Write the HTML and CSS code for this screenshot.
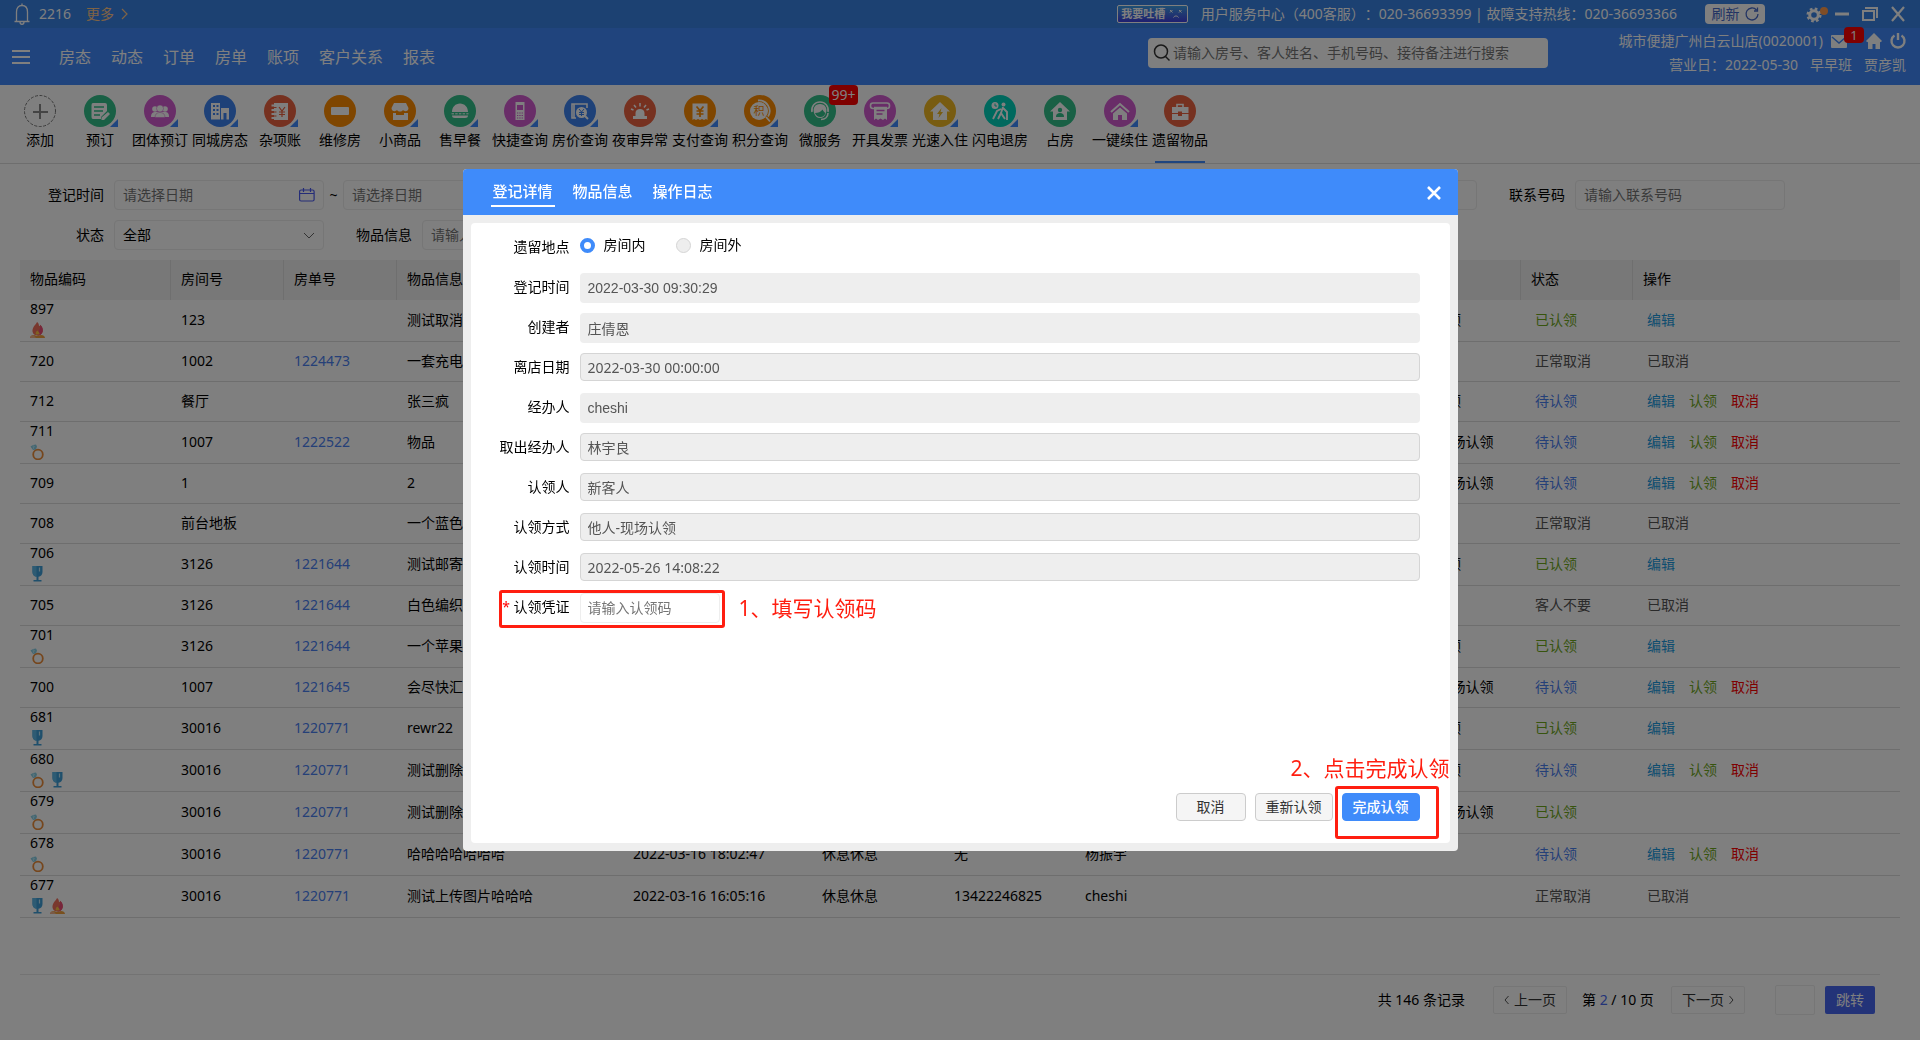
FILE: index.html
```html
<!DOCTYPE html>
<html lang="zh-CN">
<head>
<meta charset="utf-8">
<title>遗留物品</title>
<link rel="stylesheet" href="styles.css">
</head>
<body>
<svg class="sprite" aria-hidden="true">
  <symbol id="fire" viewBox="0 0 16 16">
    <path d="M7 0c-.5 2-5 5-4.500 9.500C2.800 12 5 13.500 7.500 13.500c3 0 5.500-2 5.300-5.500-.2-2.500-1.300-4-2.600-5.300-.2 1-.6 1.300-1.200 1.500C9 2.500 8.500 1 7 0z" fill="#f2705c"/>
    <path d="M10.200 2.700c1.500 1.500 2.600 3 2.600 5.300 0 3.500-2.300 5.500-5.300 5.500 0-4 3.500-6 2.700-10.800z" fill="#ee4a78"/>
    <path d="M7.300 8.500c-1.500 1.500-2 2.500-1.500 4h3.700c.5-1.500-.7-2.500-2.200-4z" fill="#ffc545"/>
    <path d="M0 16c0-2 2-3 4-3l3 1 4-1c2 0 4 1 4 3z" fill="#f2a13c"/>
    <path d="M0 16c0-2 2-3 3.500-2.800L6 16z" fill="#f5b48c"/>
  </symbol>
  <symbol id="ring" viewBox="0 0 16 16">
    <path d="M.5 2.500 3 1l3-.5 1 2-1 3-3 .5z" fill="#86cfe6"/>
    <path d="M3 3.500 5 2.500M3 1l.5 4" stroke="#b9e8f5" fill="none"/>
    <circle cx="8" cy="10.500" r="4.800" fill="none" stroke="#ec8d3a" stroke-width="1.800"/>
  </symbol>
  <symbol id="cup" viewBox="0 0 16 16">
    <path d="M2.500 0h10v6c0 2.500-1.500 4.300-4 4.800V14h3v1.500h-8V14h3v-3.200C4 10.300 2.500 8.500 2.500 6z" fill="#3f9fd8"/>
    <path d="M2.500 0h4v10.800C4 10.300 2.500 8.500 2.500 6z" fill="#5cb7e6"/>
    <path d="M9.500 1.500v4" stroke="#bfe6f8" stroke-width="1.200"/>
  </symbol>
</svg>

<header>
  <div class="strip">
    <svg class="bell" width="16" height="22" viewBox="0 0 16 22" fill="none" stroke="#fff" stroke-width="1.300"><path d="M8 .5v2M2.500 18V9c0-4 2-6.500 5.500-6.500s5.500 2.500 5.500 6.500v9M.5 18.500h15M6 19c0 3 4 3 4 0"/></svg>
    <span>2216</span>
    <a class="more" href="#">更多<svg width="7" height="12" viewBox="0 0 7 12" fill="none" stroke="currentColor" stroke-width="1.200"><path d="M1 1l5 5-5 5"/></svg></a>
    <button class="gripe">我要吐槽<svg width="14" height="10" viewBox="0 0 14 10" fill="none" stroke="#fff"><path d="M1 1l2.500 2.500M3.500 1 1 3.500M10 1l2.500 2.500M12.500 1 10 3.500M4.500 8.500c1-2 4-2 5 0"/></svg></button>
    <span class="hotline">用户服务中心（400客服）：020-36693399 | 故障支持热线：020-36693366</span>
    <button class="refresh">刷新<svg width="14" height="14" viewBox="0 0 14 14" fill="none" stroke="currentColor" stroke-width="1.300"><path d="M11.500 3A6 6 0 1 0 13 7M12.500.5V4H9"/></svg></button>
    <div class="window">
      <button aria-label="设置"><svg width="22" height="20" viewBox="0 0 22 20"><circle cx="8" cy="11" r="4.300" fill="none" stroke="#fff" stroke-width="3"/><circle cx="8" cy="11" r="6.300" fill="none" stroke="#fff" stroke-width="2.500" stroke-dasharray="2.600 2.350"/><circle cx="18" cy="7" r="4" fill="#ff9a4d"/></svg></button>
      <button aria-label="最小化"><svg width="14" height="14" viewBox="0 0 14 14"><path d="M0 7h14" stroke="#fff" stroke-width="3"/></svg></button>
      <button aria-label="还原"><svg width="16" height="14" viewBox="0 0 16 14" fill="none" stroke="#fff" stroke-width="2"><path d="M1 4h11v9H1zM3 1h12v10"/></svg></button>
      <button aria-label="关闭窗口"><svg width="14" height="14" viewBox="0 0 14 14"><path d="M1 0l12 14M13 0 1 14" stroke="#fff" stroke-width="2.200"/></svg></button>
    </div>
  </div>
  <div class="nav">
    <button class="burger" aria-label="菜单"><svg width="18" height="16" viewBox="0 0 18 16"><path d="M0 2h18M0 8h18M0 14h18" stroke="#fff" stroke-width="2"/></svg></button>
    <nav>
      <a href="#">房态</a><a href="#">动态</a><a href="#">订单</a><a href="#">房单</a><a href="#">账项</a><a href="#">客户关系</a><a href="#">报表</a>
    </nav>
    <div class="search">
      <svg width="18" height="18" viewBox="0 0 18 18" fill="none" stroke="#333" stroke-width="1.500"><circle cx="8" cy="7.500" r="6.500"/><path d="m12.500 12.500 4 4"/></svg>
      <input type="search" aria-label="搜索" placeholder="请输入房号、客人姓名、手机号码、接待备注进行搜索">
    </div>
    <div class="account">
      <div class="line">
        <span>城市便捷广州白云山店(0020001)</span>
        <button class="mail" aria-label="消息"><svg width="16" height="16" viewBox="0 0 16 16"><rect y="2" width="16" height="13" rx="1" fill="#fff"/><path d="m1 4 7 6 7-6" fill="none" stroke="#4189fa" stroke-width="1.500"/></svg><span class="badge">1</span></button>
        <button aria-label="首页"><svg width="16" height="16" viewBox="0 0 16 16" fill="#fff"><path d="m8 0 8 8-1.300 1.300L14 8.700V16H9.500v-5h-3v5H2V8.700l-.7.600L0 8z"/></svg></button>
        <button aria-label="退出"><svg width="16" height="16" viewBox="0 0 16 16" fill="none" stroke="#fff" stroke-width="2.400"><path d="M4.500 2.500a6.500 6.500 0 1 0 7 0M8 0v7"/></svg></button>
      </div>
      <div class="line">
        <span>营业日：2022-05-30</span><span>早早班</span><span>贾彦凯</span>
      </div>
    </div>
  </div>
</header>

<div class="tools">
  <button><svg class="ico" viewBox="-4 0 40 32"><circle cx="16" cy="16" r="15.500" fill="none" stroke="#777" stroke-dasharray="3 1.500"/><path d="M16 9v15M9 17h15" stroke="#888" stroke-width="2"/></svg>添加</button>
  <button><svg class="ico" viewBox="-4 0 40 32"><circle class="green" cx="16" cy="16" r="16"/><path d="M26 32h8v-8z" fill="#3f8bff"/><path d="M9 8h12q2 0 2 2v6l-6 6v2H9q-1.500 0-1.500-2V10Q7.500 8 9 8zM24 17l2 2-6 6h-2.500v-2.500z" fill="#fff"/><path class="s-green" d="M10 12h10M10 16h9M10 20h6" stroke-width="1.300"/></svg>预订</button>
  <button><svg class="ico" viewBox="-4 0 40 32"><circle class="purple" cx="16" cy="16" r="16"/><path d="M26 32h8v-8z" fill="#3f8bff"/><g fill="#fff"><circle cx="11" cy="14" r="2.800"/><circle cx="21" cy="14" r="2.800"/><path d="M7 22c0-4 2-5 4.500-5H21c2.500 0 4 1 4 5z"/></g><g fill="#fff" class="s-purple" stroke-width=".5"><circle cx="16" cy="13.500" r="3.500"/><path d="M11 22.500c0-3.500 2-5 5-5s5 1.500 5 5z"/></g></svg>团体预订</button>
  <button><svg class="ico" viewBox="-4 0 40 32"><circle class="blue" cx="16" cy="16" r="16"/><path d="M26 32h8v-8z" fill="#3f8bff"/><path d="M7 8h9v16.500H7zM17 13h8v11.500h-2.500V18h-3v6.500H17z" fill="#fff"/><path class="s-blue" d="M9 11h2M12.500 11h2M9 15h2M12.500 15h2M9 19h2M12.500 19h2" stroke-width="2"/></svg>同城房态</button>
  <button><svg class="ico" viewBox="-4 0 40 32"><circle class="red" cx="16" cy="16" r="16"/><path d="M26 32h8v-8z" fill="#3f8bff"/><path d="M10 8h14v17H10z" fill="#fff"/><path d="M7.500 10.500h4M7.500 15h4M7.500 19h4M7.500 23h4" stroke="#fff" stroke-width="1.800"/><path class="s-red" d="m15 12 3 4 3-4M18 16v6M15 17h6M15 19.500h6M10 12.500h2.500M10 17h2.500M10 21h2.500" fill="none" stroke-width="1.200"/></svg>杂项账</button>
  <button><svg class="ico" viewBox="-4 0 40 32"><circle class="orange" cx="16" cy="16" r="16"/><rect x="7" y="12" width="18" height="8" rx="1" fill="#fff"/></svg>维修房</button>
  <button><svg class="ico" viewBox="-4 0 40 32"><circle class="orange" cx="16" cy="16" r="16"/><path d="M26 32h8v-8z" fill="#3f8bff"/><path d="M10 8h12l2.500 5c0 3.500-4 4-5.500 2-1.500 2-4.500 2-6 0-1.500 2-5.500 1.500-5.500-2zM9 18h3v2h8v-2h4v7H9z" fill="#fff"/></svg>小商品</button>
  <button><svg class="ico" viewBox="-4 0 40 32"><circle class="green" cx="16" cy="16" r="16"/><path d="M26 32h8v-8z" fill="#3f8bff"/><path d="M8 17c0-5 3.500-8.500 8-8.500s8 3.500 8 8.500zM8 20.500h16q0 2.500-3 2.500H11q-3 0-3-2.500z" fill="#fff"/><path d="M7.500 18.800h17" stroke="#fff" stroke-dasharray="2.500 1.200"/></svg>售早餐</button>
  <button><svg class="ico" viewBox="-4 0 40 32"><circle class="purple" cx="16" cy="16" r="16"/><path d="M26 32h8v-8z" fill="#3f8bff"/><path d="M11.500 7h9v18h-9z" fill="#fff"/><path class="purple" d="M13 10h6v5h-6z"/><path class="s-purple" d="M13 18h6M13 20.500h6M13 23h6" stroke-width="1.200" stroke-dasharray="1.300 1"/></svg>快捷查询</button>
  <button><svg class="ico" viewBox="-4 0 40 32"><circle class="blue" cx="16" cy="16" r="16"/><path d="M26 32h8v-8z" fill="#3f8bff"/><path d="M12 23H8V9h15v4M10 9v14" fill="none" stroke="#fff" stroke-width="1.600"/><circle cx="17.500" cy="17.500" r="5.500" fill="#fff"/><path d="m21 21 3 3" stroke="#fff" stroke-width="2"/><path class="s-blue" d="m15 14 2.500 3 2.500-3M17.500 17v4M15 17.500h5M15 19.500h5" fill="none"/></svg>房价查询</button>
  <button><svg class="ico" viewBox="-4 0 40 32"><circle class="red" cx="16" cy="16" r="16"/><path d="M11.500 21v-3c0-2.500 2-4 4.500-4s4.500 1.500 4.500 4v3H23v3H9v-3z" fill="#fff"/><path d="M16 8v3.500M10 10l2 2.500M22 10l-2 2.500M7 14l2.500 1M25 14l-2.500 1" stroke="#fff" stroke-width="1.500"/></svg>夜审异常</button>
  <button><svg class="ico" viewBox="-4 0 40 32"><circle class="orange" cx="16" cy="16" r="16"/><path d="M26 32h8v-8z" fill="#3f8bff"/><path d="M8.500 8.500h15V25L22 24l-2 1-2-1-2 1-2-1-2 1-2-1-1.500 1z" fill="#fff"/><path class="s-orange" d="m12.500 11.500 3.500 4 3.500-4M16 15.500V22M12.500 16h7M12.500 19h7" fill="none" stroke-width="1.700"/></svg>支付查询</button>
  <button><svg class="ico" viewBox="-4 0 40 32"><circle class="orange" cx="16" cy="16" r="16"/><path d="M26 32h8v-8z" fill="#3f8bff"/><circle cx="15" cy="16" r="9" fill="#fff"/><path d="M14 5.500a10.500 10.500 0 0 1 10 16M22 22l4 4.500" fill="none" stroke="#fff" stroke-width="1.800"/><text x="15" y="20" text-anchor="middle" font-size="11" class="orange">积</text></svg>积分查询</button>
  <button><svg class="ico" viewBox="-4 0 40 32"><circle class="green" cx="16" cy="16" r="16"/><path d="M10 18c-1.500-5 1-9 6-9s7.500 4 6 9c-1 3-3 5-6 5s-5-2-6-5z" fill="#fff"/><path d="M8 17c-1-6 3-10 8-10s9 4 8 10M24 18c0 4-3 6.500-7 6.500" fill="none" stroke="#fff" stroke-width="1.600"/><path class="green" d="M11 18c3 0 6-1 7.500-3.500 1 2 2 3 3 3.500-1 2.500-2.500 4-5 4s-4.500-1.500-5.500-4z"/></svg>微服务<span class="badge">99+</span></button>
  <button><svg class="ico" viewBox="-4 0 40 32"><circle class="purple" cx="16" cy="16" r="16"/><path d="M26 32h8v-8z" fill="#3f8bff"/><rect x="6.500" y="8" width="19" height="5.500" rx="2.500" fill="none" stroke="#fff" stroke-width="1.600"/><path d="M10 11h13v14l-2-1.500-2 1.500-2.500-1.500L14 25l-2-1.500-2 1.500z" fill="#fff"/><path class="s-purple" d="M9 11h14M12.500 15.500h8M12.500 19h6" stroke-width="1.300"/></svg>开具发票</button>
  <button><svg class="ico" viewBox="-4 0 40 32"><circle class="yellow" cx="16" cy="16" r="16"/><path d="M26 32h8v-8z" fill="#3f8bff"/><path d="m16 7 10 9.500h-3V25H9v-8.500H6z" fill="#fff"/><path class="yellow" d="M17.500 13 13 19h2.500l-1 4 4.500-6h-2.500z"/></svg>光速入住</button>
  <button><svg class="ico" viewBox="-4 0 40 32"><circle class="teal" cx="16" cy="16" r="16"/><path d="M26 32h8v-8z" fill="#3f8bff"/><g fill="#fff"><circle cx="11" cy="10.500" r="3.500"/><circle cx="19.500" cy="9.500" r="2"/></g><path d="m19 12-2 6 4 6M17 18l-3 6M19 13l4 4v8M17 14l-4 2-4 8" fill="none" stroke="#fff" stroke-width="1.900"/><path class="s-teal" d="M11 8.500v2.500h2" fill="none"/></svg>闪电退房</button>
  <button><svg class="ico" viewBox="-4 0 40 32"><circle class="green" cx="16" cy="16" r="16"/><path d="m16 7 10 9.500h-3V25H9v-8.500H6z" fill="#fff"/><circle class="green" cx="16" cy="15" r="2.200"/><path class="green" d="M12 22c0-3 1.500-4 4-4s4 1 4 4z"/></svg>占房</button>
  <button><svg class="ico" viewBox="-4 0 40 32"><circle class="purple" cx="16" cy="16" r="16"/><path d="M26 32h8v-8z" fill="#3f8bff"/><path d="m7 17 9-8 9 8" fill="none" stroke="#fff" stroke-width="2"/><path d="m16 12.500 7 6V25h-5v-5h-4v5H9v-6.500z" fill="#fff"/></svg>一键续住</button>
  <button class="on"><svg class="ico" viewBox="-4 0 40 32"><circle class="red" cx="16" cy="16" r="16"/><path d="M13 12V9.500h6V12" fill="none" stroke="#fff" stroke-width="1.600"/><path d="M8 12h16.500v6H18v-1.500h-4V18H8zM8 19h6v2h4v-2h6.500v6H8z" fill="#fff"/></svg>遗留物品</button>
</div>

<main>
  <form class="filters">
    <div class="frow">
      <label for="d1">登记时间</label>
      <div class="box"><input id="d1" placeholder="请选择日期"><svg width="16" height="14" viewBox="0 0 16 14" fill="none" stroke="#4a5af0" stroke-width="1.200"><rect x=".6" y="2" width="14.500" height="11" rx="1.500"/><path d="M1 5.500h14M4.500 0v4M11.500 0v4"/></svg></div>
      <span class="tilde">~</span>
      <div class="box"><input aria-label="结束日期" placeholder="请选择日期"></div>
      <div class="box last"><input aria-label="联系人"></div>
      <label class="gap" for="tel">联系号码</label>
      <div class="box"><input id="tel" placeholder="请输入联系号码"></div>
    </div>
    <div class="frow">
      <label for="st">状态</label>
      <div class="box"><select id="st"><option>全部</option></select><svg width="12" height="7" viewBox="0 0 12 7" fill="none" stroke="#666"><path d="m1 1 5 5 5-5"/></svg></div>
      <label class="gap" for="info">物品信息</label>
      <div class="box"><input id="info" placeholder="请输入物品信息"></div>
    </div>
  </form>

  <table>
    <colgroup><col class="w-id"><col class="w-room"><col class="w-room"><col class="w-info"><col class="w-time"><col class="w-name"><col class="w-phone"><col class="w-by"><col class="w-way"><col class="w-state"><col></colgroup>
    <thead><tr><th>物品编码</th><th>房间号</th><th>房单号</th><th>物品信息</th><th>登记时间</th><th>客人</th><th>联系号码</th><th>经办人</th><th>方式</th><th>状态</th><th>操作</th></tr></thead>
    <tbody>
      <tr class="tall"><td>897<div class="tags"><svg><use href="#fire"/></svg></div></td><td>123</td><td></td><td>测试取消</td><td></td><td></td><td></td><td></td><td>邮寄认领</td><td class="ok">已认领</td><td><a class="edit" href="#">编辑</a></td></tr>
      <tr><td>720</td><td>1002</td><td><a href="#">1224473</a></td><td>一套充电器</td><td></td><td></td><td></td><td></td><td></td><td class="off">正常取消</td><td class="off">已取消</td></tr>
      <tr><td>712</td><td>餐厅</td><td></td><td>张三疯</td><td></td><td></td><td></td><td></td><td>邮寄认领</td><td class="wait">待认领</td><td><a class="edit" href="#">编辑</a><a class="claim" href="#">认领</a><a class="drop" href="#">取消</a></td></tr>
      <tr class="tall"><td>711<div class="tags"><svg><use href="#ring"/></svg></div></td><td>1007</td><td><a href="#">1222522</a></td><td>物品</td><td></td><td></td><td></td><td></td><td>他人-现场认领</td><td class="wait">待认领</td><td><a class="edit" href="#">编辑</a><a class="claim" href="#">认领</a><a class="drop" href="#">取消</a></td></tr>
      <tr><td>709</td><td>1</td><td></td><td>2</td><td></td><td></td><td></td><td></td><td>他人-现场认领</td><td class="wait">待认领</td><td><a class="edit" href="#">编辑</a><a class="claim" href="#">认领</a><a class="drop" href="#">取消</a></td></tr>
      <tr><td>708</td><td>前台地板</td><td></td><td>一个蓝色</td><td></td><td></td><td></td><td></td><td></td><td class="off">正常取消</td><td class="off">已取消</td></tr>
      <tr class="tall"><td>706<div class="tags"><svg><use href="#cup"/></svg></div></td><td>3126</td><td><a href="#">1221644</a></td><td>测试邮寄</td><td></td><td></td><td></td><td></td><td>邮寄认领</td><td class="ok">已认领</td><td><a class="edit" href="#">编辑</a></td></tr>
      <tr><td>705</td><td>3126</td><td><a href="#">1221644</a></td><td>白色编织</td><td></td><td></td><td></td><td></td><td></td><td class="off">客人不要</td><td class="off">已取消</td></tr>
      <tr class="tall"><td>701<div class="tags"><svg><use href="#ring"/></svg></div></td><td>3126</td><td><a href="#">1221644</a></td><td>一个苹果</td><td></td><td></td><td></td><td></td><td>邮寄认领</td><td class="ok">已认领</td><td><a class="edit" href="#">编辑</a></td></tr>
      <tr><td>700</td><td>1007</td><td><a href="#">1221645</a></td><td>会尽快汇</td><td></td><td></td><td></td><td></td><td>他人-现场认领</td><td class="wait">待认领</td><td><a class="edit" href="#">编辑</a><a class="claim" href="#">认领</a><a class="drop" href="#">取消</a></td></tr>
      <tr class="tall"><td>681<div class="tags"><svg><use href="#cup"/></svg></div></td><td>30016</td><td><a href="#">1220771</a></td><td>rewr22</td><td></td><td></td><td></td><td></td><td>邮寄认领</td><td class="ok">已认领</td><td><a class="edit" href="#">编辑</a></td></tr>
      <tr class="tall"><td>680<div class="tags"><svg><use href="#ring"/></svg><svg><use href="#cup"/></svg></div></td><td>30016</td><td><a href="#">1220771</a></td><td>测试删除</td><td></td><td></td><td></td><td></td><td>邮寄认领</td><td class="wait">待认领</td><td><a class="edit" href="#">编辑</a><a class="claim" href="#">认领</a><a class="drop" href="#">取消</a></td></tr>
      <tr class="tall"><td>679<div class="tags"><svg><use href="#ring"/></svg></div></td><td>30016</td><td><a href="#">1220771</a></td><td>测试删除</td><td></td><td></td><td></td><td></td><td>他人-现场认领</td><td class="ok">已认领</td><td></td></tr>
      <tr class="tall"><td>678<div class="tags"><svg><use href="#ring"/></svg></div></td><td>30016</td><td><a href="#">1220771</a></td><td>哈哈哈哈哈哈哈</td><td>2022-03-16 18:02:47</td><td>休息休息</td><td>无</td><td>杨振宇</td><td></td><td class="wait">待认领</td><td><a class="edit" href="#">编辑</a><a class="claim" href="#">认领</a><a class="drop" href="#">取消</a></td></tr>
      <tr class="tall"><td>677<div class="tags"><svg><use href="#cup"/></svg><svg><use href="#fire"/></svg></div></td><td>30016</td><td><a href="#">1220771</a></td><td>测试上传图片哈哈哈</td><td>2022-03-16 16:05:16</td><td>休息休息</td><td>13422246825</td><td>cheshi</td><td></td><td class="off">正常取消</td><td class="off">已取消</td></tr>
    </tbody>
  </table>

  <div class="pager">
    <span class="total">共 146 条记录</span>
    <button class="step"><svg width="5" height="10" viewBox="0 0 5 10" fill="none" stroke="#555"><path d="M4.500 1 1 5l3.500 4"/></svg>上一页</button>
    <span class="page">第 <b>2</b> / 10 页</span>
    <button class="step">下一页<svg width="5" height="10" viewBox="0 0 5 10" fill="none" stroke="#555"><path d="M.5 1 4 5 .5 9"/></svg></button>
    <input class="jump" aria-label="页码">
    <button class="go">跳转</button>
  </div>
</main>

<div class="overlay">
  <section class="modal" role="dialog" aria-label="登记详情">
    <div class="mhead">
      <button class="tab active">登记详情</button><button class="tab">物品信息</button><button class="tab">操作日志</button>
      <button class="close" aria-label="关闭"><svg width="16" height="16" viewBox="0 0 16 16"><path d="m2 2 12 12M14 2 2 14" stroke="#fff" stroke-width="2.600"/></svg></button>
    </div>
    <div class="mbody">
      <form class="panel">
        <div class="row"><span class="lab">遗留地点</span><div class="radios"><label><input type="radio" name="place" checked>房间内</label><label><input type="radio" name="place">房间外</label></div></div>
        <div class="row"><label for="f1">登记时间</label><input id="f1" readonly value="2022-03-30 09:30:29"></div>
        <div class="row"><label for="f2">创建者</label><input id="f2" readonly value="庄倩恩"></div>
        <div class="row"><label for="f3">离店日期</label><input id="f3" class="line" readonly value="2022-03-30 00:00:00"></div>
        <div class="row"><label for="f4">经办人</label><input id="f4" readonly value="cheshi"></div>
        <div class="row"><label for="f5">取出经办人</label><input id="f5" class="line" readonly value="林宇良"></div>
        <div class="row"><label for="f6">认领人</label><input id="f6" class="line" readonly value="新客人"></div>
        <div class="row"><label for="f7">认领方式</label><input id="f7" class="line" readonly value="他人-现场认领"></div>
        <div class="row"><label for="f8">认领时间</label><input id="f8" class="line" readonly value="2022-05-26 14:08:22"></div>
        <div class="row code"><label for="f9"><i>*</i> 认领凭证</label><input id="f9" placeholder="请输入认领码"><span class="note">1、填写认领码</span><span class="mark"></span></div>
        <div class="foot">
          <span class="note">2、点击完成认领</span>
          <button type="button" class="cancel">取消</button>
          <button type="button">重新认领</button>
          <span class="target"><button type="button" class="primary">完成认领</button><span class="mark"></span></span>
        </div>
      </form>
    </div>
  </section>
</div>
</body>
</html>
```

FILE: styles.css
```css
* { box-sizing: border-box; }

body {
  margin: 0;
  min-height: 100vh;
  display: flex;
  flex-direction: column;
  background: #fff;
  color: #000;
  font: 14px/20px "Noto Sans", "Noto Sans CJK SC", sans-serif;
  text-spacing-trim: space-all;
}

button, input, select {
  font: inherit;
  color: inherit;
  margin: 0;
  padding: 0;
  border: 0;
  background: none;
}

a { color: inherit; text-decoration: none; }
svg { display: block; flex: none; overflow: visible; }
.sprite { position: absolute; width: 0; height: 0; }

/* header */
header { color: #fff; }

.strip {
  display: flex;
  align-items: center;
  height: 28px;
  padding: 0 15px 0 14px;
  background: #3882e4;
}
.bell { margin-right: 9px; }
.more { display: flex; align-items: center; gap: 7px; margin-left: 15px; color: #ffc68a; }
.gripe {
  display: flex;
  align-items: center;
  justify-content: center;
  gap: 4px;
  width: 71px;
  height: 18px;
  margin: 0 13px 0 auto;
  border: 1px solid #fff;
  border-radius: 2px;
  background: linear-gradient(#3fa0e8, #4040e0);
  font-size: 11px;
  font-weight: bold;
  line-height: 16px;
}
.hotline { white-space: nowrap; }
.refresh {
  display: flex;
  align-items: center;
  justify-content: center;
  gap: 5px;
  width: 60px;
  height: 20px;
  margin-left: 28px;
  border-radius: 4px;
  background: #fff;
  color: #4468c8;
}
.window { display: flex; align-items: center; gap: 13px; margin-left: 41px; }
.window button:first-child { margin-right: -6px; }

.nav {
  display: flex;
  align-items: center;
  height: 57px;
  padding: 0 14px 0 12px;
  background: #4189fa;
}
.nav nav { display: flex; gap: 20px; margin-left: 29px; font-size: 16px; }
.search {
  display: flex;
  align-items: center;
  width: 400px;
  height: 30px;
  margin: 0 65px 8px auto;
  padding-left: 5px;
  border-radius: 4px;
  background: #fff;
}
.search input { flex: 1; margin-left: 2px; outline: 0; }
.account { width: 293px; padding-bottom: 8px; }
.account .line {
  display: flex;
  align-items: center;
  justify-content: flex-end;
  height: 24px;
  gap: 12px;
  white-space: nowrap;
}
.account .line:first-child { gap: 8px; }
.mail { position: relative; margin-right: 11px; }
.badge {
  position: absolute;
  border-radius: 4px;
  background: #f00;
  color: #fff;
  text-align: center;
}
.mail .badge { left: 13px; top: -6px; width: 20px; height: 16px; font-size: 13px; line-height: 16px; }

/* shortcuts */
.tools { display: flex; height: 79px; padding: 10px 10px 0; border-bottom: 1px solid #dcdcdc; }
.tools button {
  position: relative;
  display: flex;
  flex-direction: column;
  align-items: center;
  gap: 3px;
  width: 60px;
  line-height: 20px;
  white-space: nowrap;
}
.ico { width: 40px; height: 32px; }
.tools .badge { left: 39px; top: -10px; width: 29px; height: 20px; }
.tools .on::after {
  content: "";
  position: absolute;
  left: 5px;
  bottom: 0;
  width: 50px;
  height: 2px;
  background: #3f8bff;
}
.green { fill: #32c08a; } .s-green { stroke: #32c08a; }
.purple { fill: #d25ad0; } .s-purple { stroke: #d25ad0; }
.blue { fill: #3d82f0; } .s-blue { stroke: #3d82f0; }
.red { fill: #ec6340; } .s-red { stroke: #ec6340; }
.orange { fill: #ff8c00; } .s-orange { stroke: #ff8c00; }
.yellow { fill: #f0b822; }
.teal { fill: #00d2bc; } .s-teal { stroke: #00d2bc; }

/* filters and table */
main { flex: 1; display: flex; flex-direction: column; padding: 16px 20px 25px; }
.filters { display: flex; flex-direction: column; gap: 10px; margin-bottom: 10px; }
.frow { display: flex; align-items: center; padding-right: 115px; }
.frow label { flex: none; width: 94px; padding-right: 10px; text-align: right; }
.frow label.gap { width: 98px; }
.box {
  display: flex;
  align-items: center;
  width: 210px;
  height: 30px;
  padding: 0 8px;
  border: 1px solid #ececec;
  border-radius: 4px;
}
.box input, .box select { flex: 1; min-width: 0; appearance: none; outline: 0; }
.box.last { margin-left: auto; }
.tilde { width: 19px; text-align: center; }
::placeholder { color: #757575; opacity: 1; }

table { width: 100%; table-layout: fixed; border-spacing: 0; }
.w-id { width: 151px; }
.w-room { width: 113px; }
.w-info { width: 226px; }
.w-time { width: 189px; }
.w-name { width: 132px; }
.w-phone { width: 131px; }
.w-by { width: 320px; }
.w-way { width: 126px; }
.w-state { width: 112px; }
th {
  height: 40px;
  padding: 0 10px 2px;
  border-right: 1px solid #dedede;
  background: #f0f0f0;
  font-weight: normal;
  text-align: left;
}
th:last-child { border-right: 0; }
td { height: 40px; padding: 0 10px 2px; border-bottom: 1px solid #dcdcdc; white-space: nowrap; line-height: 16px; }
.tall td { height: 42px; }
td a { color: #4a80f0; }
td:nth-child(n+10) { padding-left: 14px; }
.tags { display: flex; gap: 4px; margin-top: 5px; }
.tags svg { width: 16px; height: 16px; }
td.ok { color: #6fa81c; }
td.wait { color: #4a80f0; }
td.off { color: #555; }
td a + a { margin-left: 14px; }
a.edit { color: #1c9be0; }
a.claim { color: #6fa81c; }
a.drop { color: #f00; }

.pager {
  display: flex;
  align-items: center;
  justify-content: flex-end;
  margin: auto 20px 0 0;
  padding: 10px 5px 0 0;
  border-top: 1px solid #e6e6e6;
}
.total { margin-right: 28px; }
.step {
  display: flex;
  align-items: center;
  justify-content: center;
  gap: 5px;
  width: 74px;
  height: 28px;
  margin-right: 15px;
  border: 1px solid #ececec;
  border-radius: 2px;
  color: #333;
}
.page { min-width: 75px; margin-right: 14px; }
.pager b { color: #4668f0; font-weight: normal; }
.jump { width: 40px; height: 30px; margin: 0 10px 0 15px; border: 1px solid #ececec; border-radius: 2px; }
.go { width: 50px; height: 28px; border-radius: 2px; background: #4666f0; color: #fff; }

/* dialog */
.overlay {
  position: fixed;
  inset: 0;
  display: flex;
  align-items: flex-start;
  justify-content: center;
  padding-top: 169px;
  background: rgba(0, 0, 0, .5);
}
.modal { width: 995px; max-width: 96%; border-radius: 4px; background: #eee; overflow: hidden; }
.mhead { display: flex; align-items: flex-start; gap: 16px; height: 46px; padding: 11px 16px 0 28px; background: #3f8bfa; color: #fff; }
.tab { height: 27px; padding: 0 2px 3px; border-bottom: 2px solid transparent; font-size: 15px; font-weight: 500; }
.tab.active { border-color: #fff; }
.close { margin: 5px 0 0 auto; }
.mbody { padding: 8px; }
.panel {
  display: flex;
  flex-direction: column;
  gap: 10px;
  min-height: 620px;
  padding: 10px 30px 22px 0;
  border-radius: 4px;
  background: #fff;
}
.row { position: relative; display: flex; align-items: flex-start; height: 30px; }
.row > label, .lab { flex: none; width: 99px; margin-right: 10px; line-height: 28px; text-align: right; }
.row > input {
  flex: 1;
  min-width: 0;
  height: 30px;
  padding: 0 8px;
  border-radius: 4px;
  background: #eee;
  color: #555;
  font-family: "Liberation Sans", "Noto Sans CJK SC", sans-serif;
  outline: 0;
}
.row > input.line { height: 28px; border: 1px solid #d5d5d5; padding: 0 7px; font-family: inherit; }
.row i { color: #f00; font-style: normal; }
.radios { display: flex; gap: 30px; height: 24px; }
.radios label { display: flex; align-items: center; gap: 9px; }
.radios input {
  appearance: none;
  width: 15px;
  height: 15px;
  border: 1px solid #d5d5d5;
  border-radius: 50%;
  background: #eee;
}
.radios input:checked { border: 4px solid #3f8bfa; background: #fff; }
.row.code input { flex: 0 0 140px; border: 1px solid #eee; padding: 0 7px; background: #fff; }
.note { color: #ff1e10; font-size: 21px; line-height: 30px; white-space: nowrap; }
.code .note { margin-left: 19px; }
.mark { position: absolute; border: 3px solid #ff1e10; border-radius: 3px; pointer-events: none; }
.code .mark { left: 28px; top: -3px; width: 226px; height: 38px; }
.foot { position: relative; display: flex; justify-content: flex-end; gap: 9px; margin-top: auto; }
.foot button {
  width: 78px;
  height: 28px;
  border: 1px solid #ccc;
  border-radius: 4px;
  background: #f5f5f5;
  color: #333;
}
.foot .cancel { width: 70px; }
.foot .primary { border-color: #3f8bfa; background: #3f8bfa; color: #fff; font-weight: 500; }
.foot .note { position: absolute; right: -30px; bottom: 38px; }
.target { position: relative; }
.target .mark { left: -7px; top: -7px; width: 104px; height: 53px; }
```
